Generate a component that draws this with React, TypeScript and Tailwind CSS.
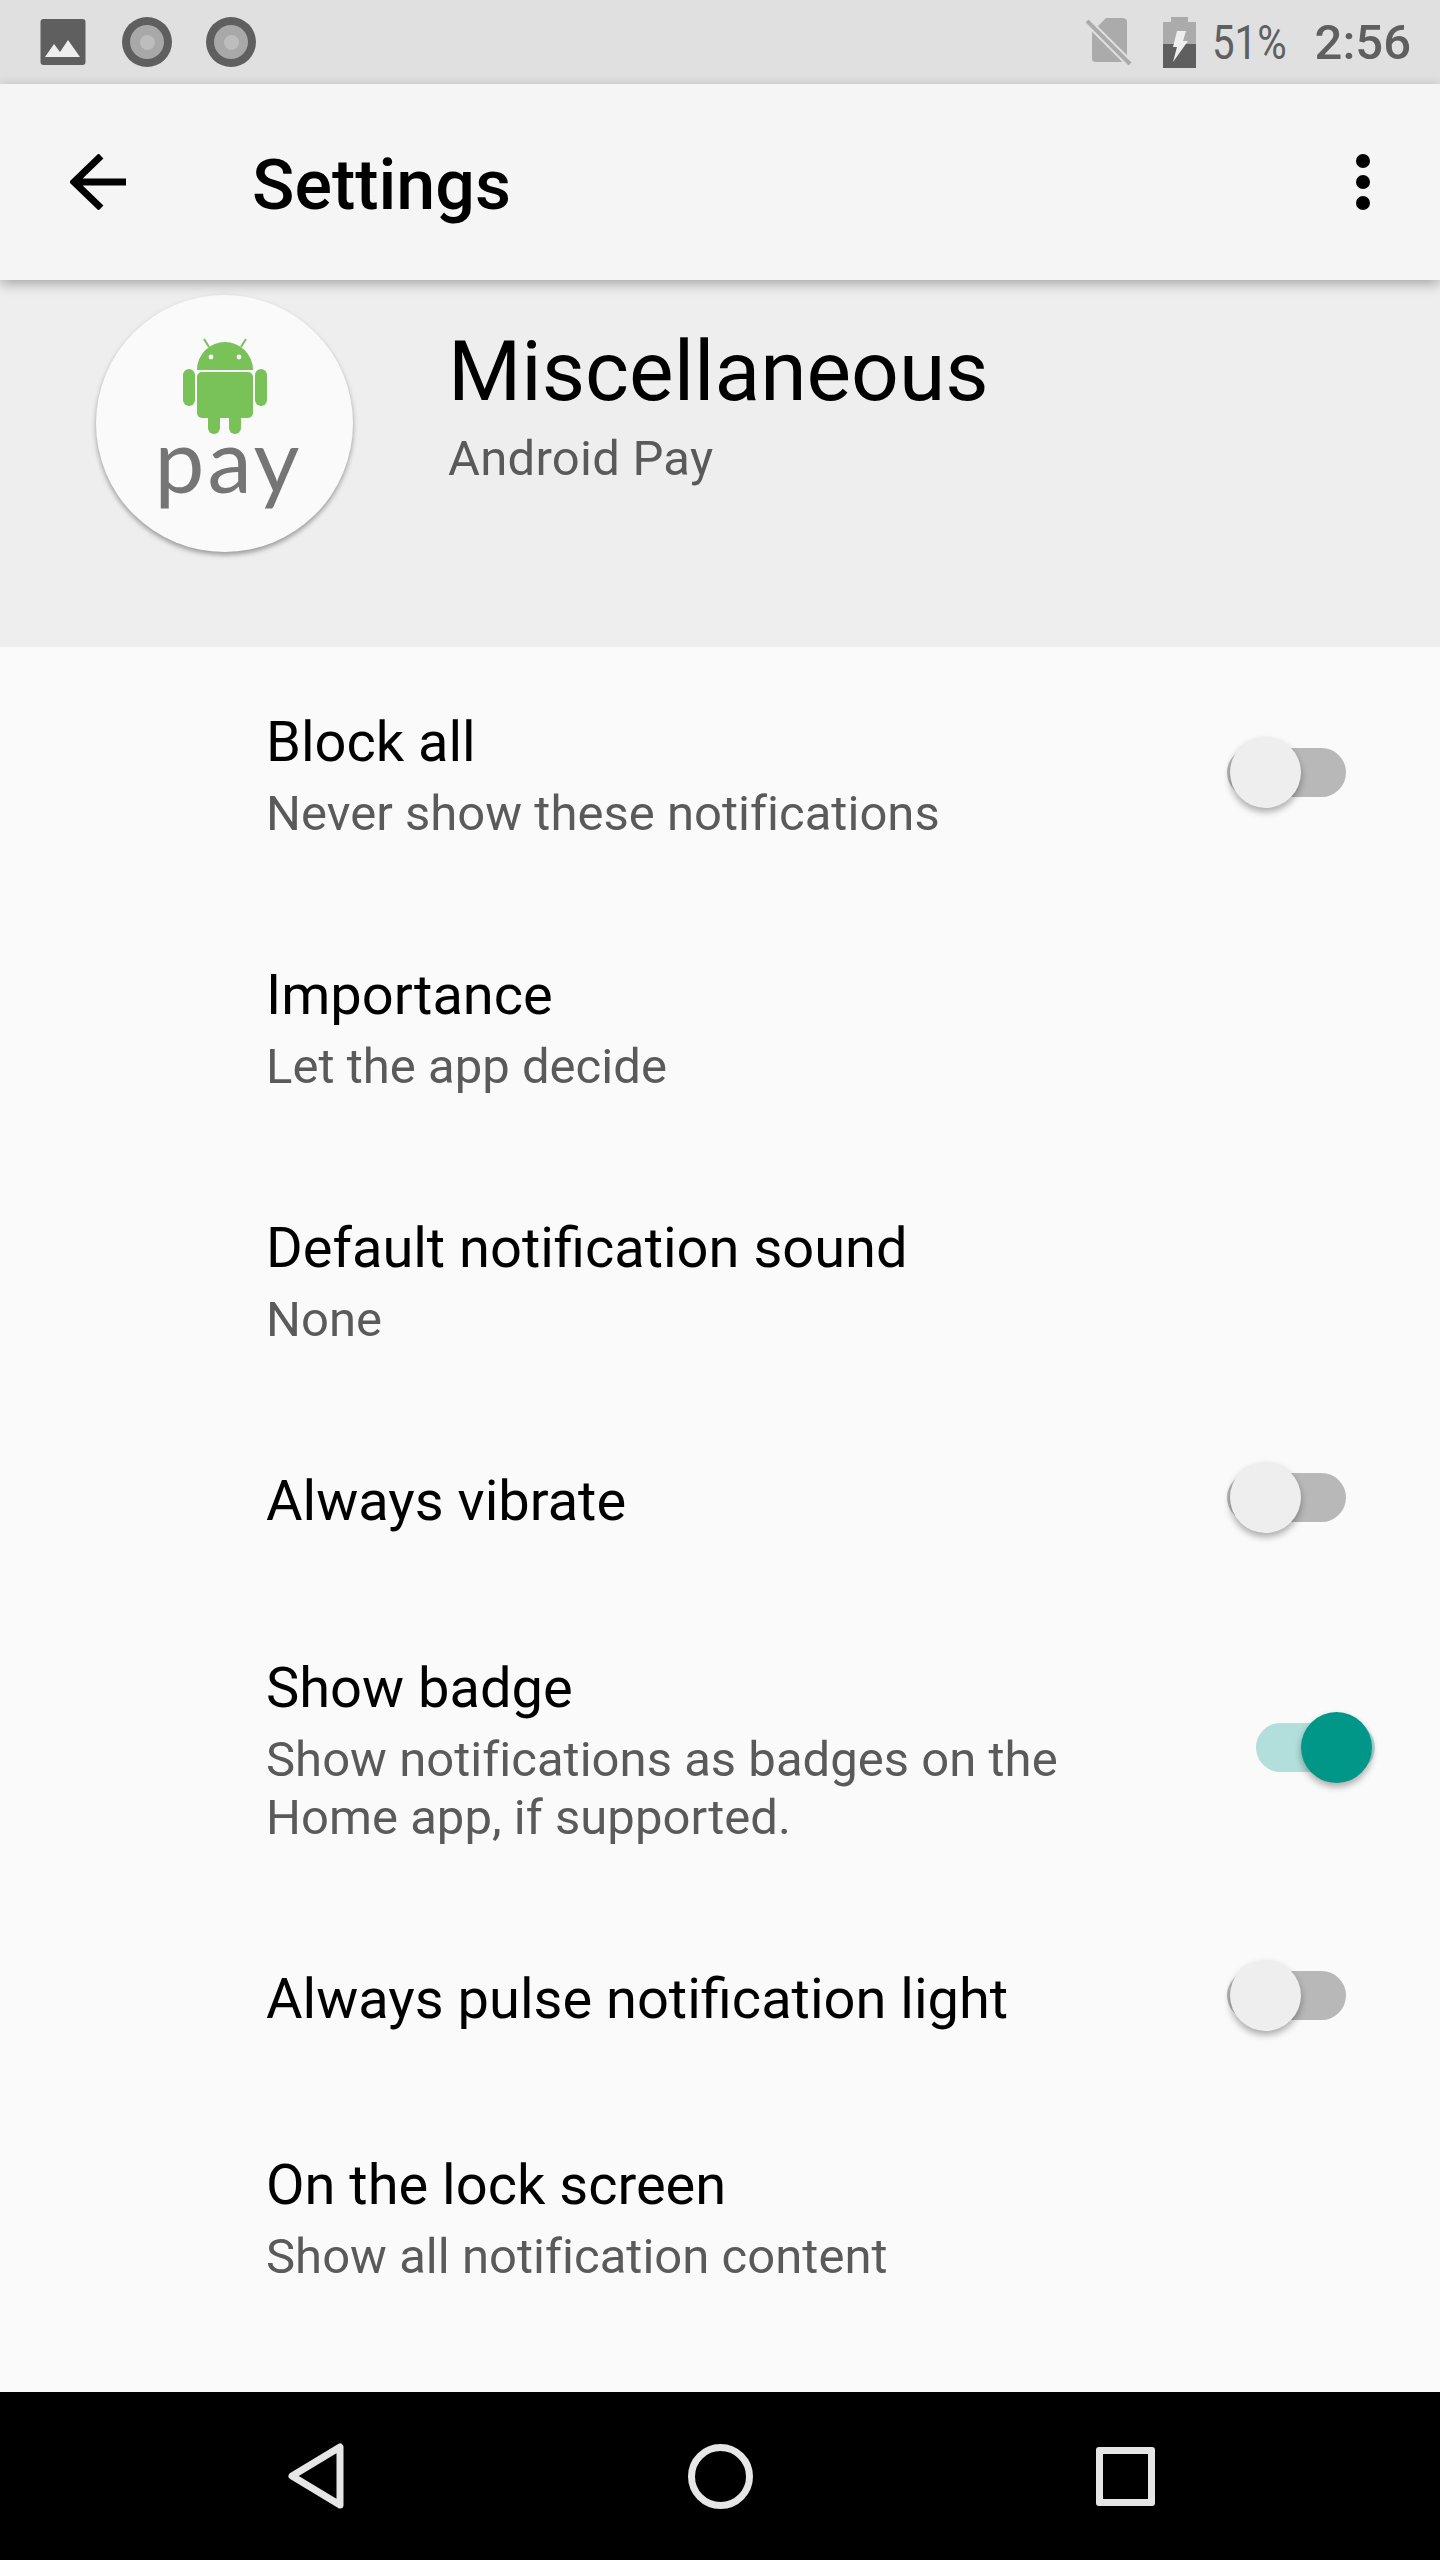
const roboto = { fontFamily: "Roboto, sans-serif" };

function Switch({ on = false, lift }: { on?: boolean; lift: string }) {
  return (
    <div className={`relative h-[49px] w-[119px] shrink-0 ${lift}`}>
      <div className={`h-full w-full rounded-full ${on ? "bg-[#b2dfdb]" : "bg-[#b8b8b8]"}`} />
      <div
        className={`absolute top-[-11px] h-[71px] w-[71px] rounded-full shadow-[0_4px_7px_rgba(0,0,0,0.32)] ${
          on ? "left-[45px] bg-[#009688]" : "left-[3px] bg-[#eeeeee]"
        }`}
      />
    </div>
  );
}

function Row({
  title,
  lines = [],
  height,
  pad,
  toggle,
  on,
}: {
  title: string;
  lines?: string[];
  height: string;
  pad: string;
  toggle?: boolean;
  on?: boolean;
}) {
  return (
    <div className={`flex items-center pl-[266px] ${height} ${pad}`}>
      <div className="min-w-0 flex-1">
        <div className="text-[56px] leading-[76px] text-[#000000]">{title}</div>
        {lines.length > 0 && (
          <div className="mt-[5px]">
            {lines.map((l) => (
              <div key={l} className="text-[49px] leading-[58px] tracking-[0.03px] text-[#5a5a5a]">
                {l}
              </div>
            ))}
          </div>
        )}
      </div>
      {toggle && <Switch on={on} lift={lines.length > 0 ? "mb-[3px]" : "mb-[7px]"} />}
    </div>
  );
}

function Dot() {
  return (
    <div className="flex h-[50px] w-[50px] shrink-0 items-center justify-center rounded-full bg-[#5f5f5f]">
      <div className="flex h-[34px] w-[34px] items-center justify-center rounded-full bg-[#a8a8a8]">
        <div className="h-[15px] w-[15px] rounded-full bg-[#bdbdbd]" />
      </div>
    </div>
  );
}

function StatusBar() {
  return (
    <div className="flex h-[84px] items-center bg-[#e0e0e0] pl-[40px] pr-[29px] text-[#5f5f5f]">
      <svg width="46" height="46" viewBox="0 0 46 46" className="shrink-0">
        <rect x="0.5" y="0" width="45" height="46" rx="3" fill="#5f5f5f" />
        <path d="M5 38 L14 25 L20 33 L28 21 L40 38 Z" fill="#eeeeee" />
      </svg>
      <div className="ml-[36px] flex gap-[34px]">
        <Dot />
        <Dot />
      </div>
      <div className="flex-1" />
      <svg width="46" height="48" viewBox="0 0 46 48" className="shrink-0">
        <path d="M20 0 H36 Q41 0 41 4 V41 Q41 44 37 44 H10 Q6 44 6 41 V14 Z" fill="#ababab" />
        <path d="M1 3 L44 46" stroke="#e0e0e0" strokeWidth="8" />
        <path d="M1 3 L44 46" stroke="#ababab" strokeWidth="4" />
      </svg>
      <svg width="33" height="51" viewBox="0 0 33 51" className="ml-[31px] shrink-0">
        <path d="M8 0 H25 V5 H33 V28 H0 V5 H8 Z" fill="#ababab" />
        <rect x="0" y="27" width="33" height="24" fill="#5f5f5f" />
        <path d="M14 14 H23 L20 24 H25 L10 45 L14 30 H10 Z" fill="#eeeeee" />
      </svg>
      <span className="ml-[16px] w-[76px] origin-left scale-x-[0.82] text-[49px] leading-none whitespace-nowrap">51%</span>
      <span className="ml-[27px] text-[49px] font-medium leading-none">2:56</span>
    </div>
  );
}

function Toolbar() {
  return (
    <div className="relative z-10 flex h-[196px] items-center bg-[#f5f5f5] pl-[70px] pr-[70px] shadow-[0_4px_12px_rgba(0,0,0,0.3)]">
      <svg width="56" height="56" viewBox="0 0 56 56" className="shrink-0">
        <path d="M56 28 H4 M31 2 L4 28 L31 54" fill="none" stroke="#000" strokeWidth="7" />
      </svg>
      <div className="ml-[126px] flex-1 pt-[5px] text-[70px] font-medium leading-none text-black">Settings</div>
      <div className="flex flex-col gap-[7px]">
        <div className="h-[14px] w-[14px] rounded-full bg-black" />
        <div className="h-[14px] w-[14px] rounded-full bg-black" />
        <div className="h-[14px] w-[14px] rounded-full bg-black" />
      </div>
    </div>
  );
}

function Header() {
  return (
    <div className="flex h-[367px] bg-[#eeeeee] pl-[96px] pt-[15px]">
      <div className="flex h-[257px] w-[257px] shrink-0 flex-col items-center rounded-full bg-[#fafafa] pt-[43px] shadow-[0_3px_5px_rgba(0,0,0,0.35)]">
        <svg width="84" height="96" viewBox="0 0 84 96" className="shrink-0">
          <g fill="#78c257">
            <path d="M14 32 A28 28 0 0 1 70 32 Z" />
            <rect x="14" y="34" width="56" height="46" rx="5" />
            <rect x="0" y="31" width="12" height="37" rx="6" />
            <rect x="72" y="31" width="12" height="37" rx="6" />
            <rect x="25" y="70" width="12" height="26" rx="6" />
            <rect x="46" y="70" width="12" height="26" rx="6" />
          </g>
          <path d="M26 9 L21 1 M58 9 L63 1" stroke="#78c257" strokeWidth="2" />
          <circle cx="28" cy="19" r="2.4" fill="#fafafa" />
          <circle cx="56" cy="19" r="2.4" fill="#fafafa" />
        </svg>
        <div className="ml-[8px] mt-[-11px] text-[89px] leading-[72px] tracking-[3px] text-[#757575]" style={{ fontFamily: "Lato, sans-serif" }}>
          pay
        </div>
      </div>
      <div className="ml-[95px] pt-[27px]">
        <div className="text-[84px] leading-[100px] text-black">Miscellaneous</div>
        <div className="mt-[8px] text-[49px] leading-[58px] tracking-[0.25px] text-[#5a5a5a]">Android Pay</div>
      </div>
    </div>
  );
}

function NavBar() {
  return (
    <div className="flex h-[168px] items-center bg-black pl-[288px] pr-[285px]">
      <svg width="56" height="66" viewBox="0 0 56 66" className="shrink-0">
        <path d="M52 4 V62 L4 33 Z" fill="none" stroke="#e6e6e6" strokeWidth="7" strokeLinejoin="round" />
      </svg>
      <div className="flex-1" />
      <div className="h-[65px] w-[65px] rounded-full border-[7px] border-[#e6e6e6]" />
      <div className="flex-1" />
      <div className="h-[59px] w-[59px] rounded-[3px] border-[7px] border-[#e6e6e6]" />
    </div>
  );
}

export default function App() {
  return (
    <div className="flex h-[2560px] w-[1440px] flex-col bg-[#fafafa]" style={roboto}>
      <StatusBar />
      <Toolbar />
      <Header />
      <div className="flex-1">
        <Row title="Block all" lines={["Never show these notifications"]} height="h-[253px]" pad="pr-[94px]" toggle />
        <Row title="Importance" lines={["Let the app decide"]} height="h-[253px]" pad="" />
        <Row title="Default notification sound" lines={["None"]} height="h-[253px]" pad="" />
        <Row title="Always vibrate" height="h-[190px]" pad="pr-[94px]" toggle />
        <Row title="Show badge" lines={["Show notifications as badges on the", "Home app, if supported."]} height="h-[305px]" pad="pr-[65px]" toggle on />
        <Row title="Always pulse notification light" height="h-[196px]" pad="pr-[94px]" toggle />
        <Row title="On the lock screen" lines={["Show all notification content"]} height="h-[239px]" pad="" />
      </div>
      <NavBar />
    </div>
  );
}
